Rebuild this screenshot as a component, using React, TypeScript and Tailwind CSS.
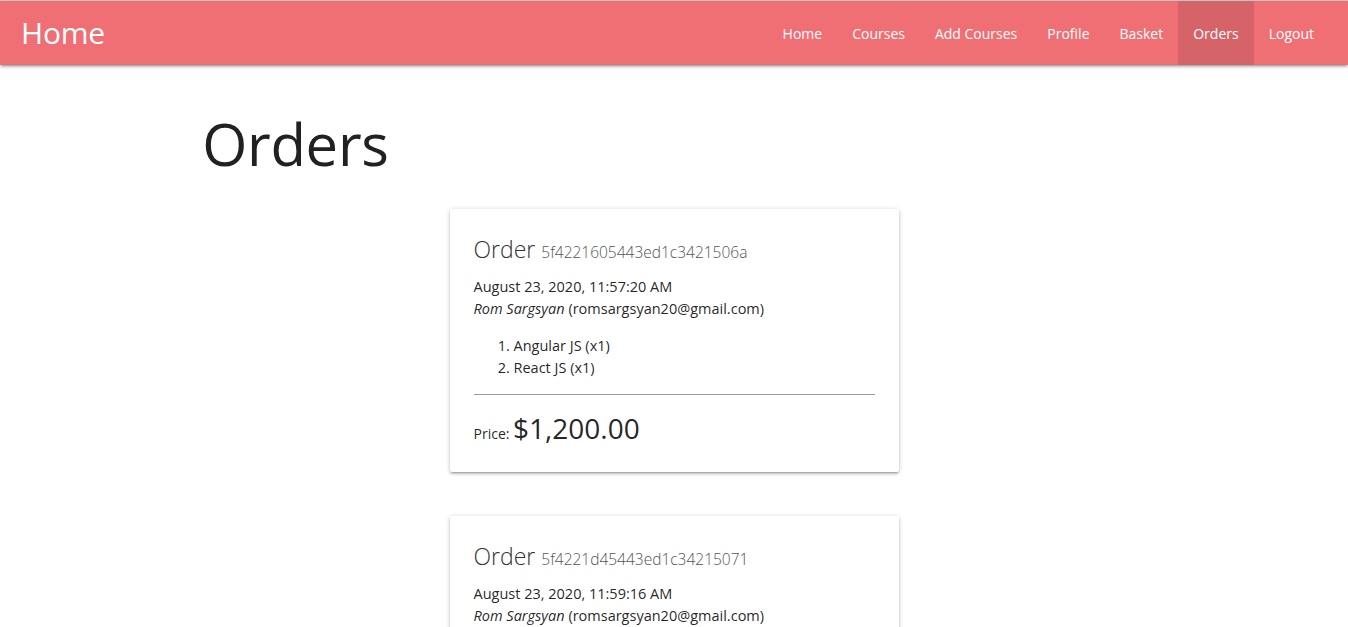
import React from "react";

const orders = [
  {
    id: "5f4221605443ed1c3421506a",
    date: "August 23, 2020, 11:57:20 AM",
    items: ["Angular JS (x1)", "React JS (x1)"],
    price: "$1,200.00",
  },
  {
    id: "5f4221d45443ed1c34215071",
    date: "August 23, 2020, 11:59:16 AM",
    items: ["Angular JS (x1)", "React JS (x1)"],
    price: "$1,200.00",
  },
];

const links = ["Home", "Courses", "Add Courses", "Profile", "Basket", "Orders", "Logout"];

export default function App() {
  return (
    <div
      className="min-h-screen bg-white text-[rgba(0,0,0,0.87)] border-t border-[#cfcfcf]"
      style={{ fontFamily: '"Open Sans", "Noto Sans", sans-serif' }}
    >
      <nav className="h-16 bg-[#ef6f74] text-white flex items-center justify-between pl-[21px] pr-[19px] shadow-[0_2px_2px_0_rgba(0,0,0,0.14),0_3px_1px_-2px_rgba(0,0,0,0.12),0_1px_5px_0_rgba(0,0,0,0.2)] relative">
        <a className="text-[30px] leading-none tracking-[-0.2px]">Home</a>
        <ul className="flex h-16">
          {links.map((l) => (
            <li key={l}>
              <a
                className={`flex items-center h-16 px-[15px] text-[14px] ${
                  l === "Orders" ? "bg-[rgba(0,0,0,0.1)]" : ""
                }`}
              >
                {l}
              </a>
            </li>
          ))}
        </ul>
      </nav>
      <div className="w-[70%] mx-auto">
        <h1 className="text-[58px] leading-[65px] font-normal mt-[46px] mb-[33px] text-[#212121] tracking-[-0.3px]">
          Orders
        </h1>
        <div className="flex flex-col items-center gap-[44px]">
          {orders.map((o) => (
            <div
              key={o.id}
              className="w-[449px] bg-white rounded-[2px] px-6 pt-6 pb-5 shadow-[0_2px_2px_0_rgba(0,0,0,0.14),0_3px_1px_-2px_rgba(0,0,0,0.12),0_1px_5px_0_rgba(0,0,0,0.2)]"
            >
              <div className="text-[23px] font-light leading-8 text-[#333] mb-2">
                Order <span className="text-[15.5px] text-[#555]">{o.id}</span>
              </div>
              <p className="text-[14.5px] leading-[22px]">{o.date}</p>
              <p className="text-[14.5px] leading-[22px]">
                <em>Rom Sargsyan</em> (romsargsyan20@gmail.com)
              </p>
              <ol className="list-decimal pl-10 my-[15px] text-[14.5px] leading-[22px]">
                {o.items.map((it) => (
                  <li key={it}>{it}</li>
                ))}
              </ol>
              <hr className="border-0 border-t border-[#9e9e9e]" />
              <p className="mt-[15px] leading-[36px] text-[14px]">
                Price: <span className="text-[28px]">{o.price}</span>
              </p>
            </div>
          ))}
        </div>
      </div>
    </div>
  );
}
